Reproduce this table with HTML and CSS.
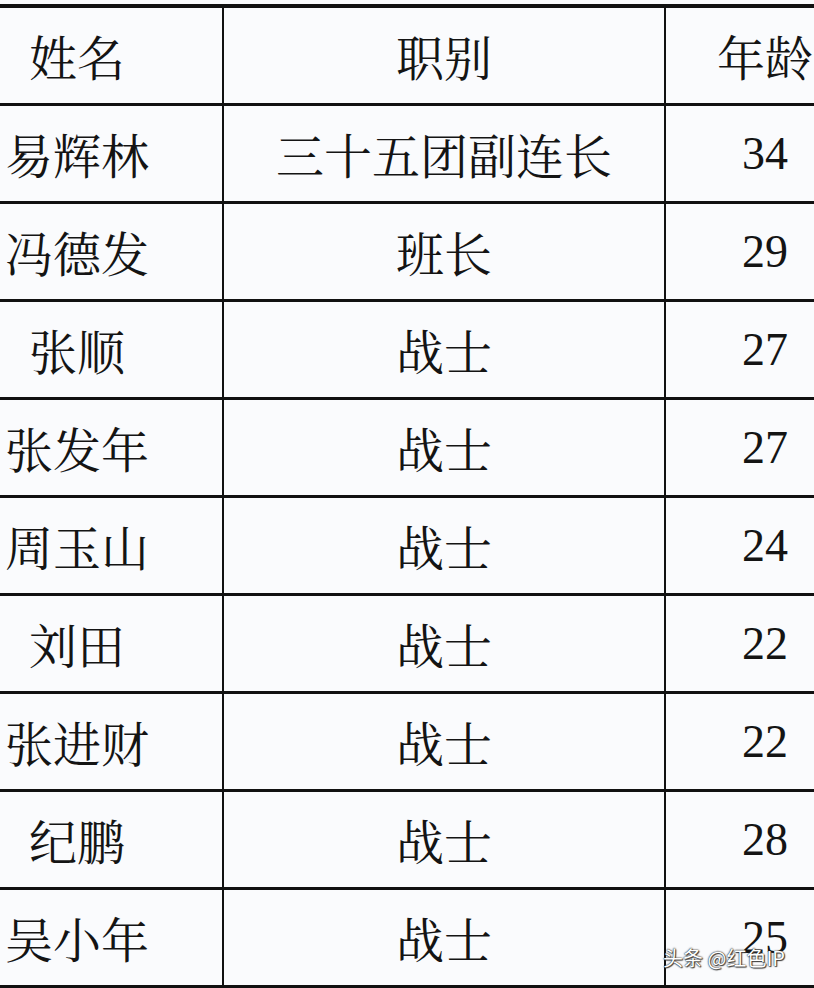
FILE: index.html
```html
<!DOCTYPE html>
<html lang="zh-CN">
<head>
<meta charset="utf-8">
<title>名单</title>
<link rel="stylesheet" href="styles.css">
</head>
<body>
<div class="page">
  <div class="sheet">
    <div class="cell c1 head">姓名</div><div class="cell c2 head">职别</div><div class="cell c3 head">年龄</div>
    <div class="cell c1">易辉林</div><div class="cell c2">三十五团副连长</div><div class="cell c3 num">34</div>
    <div class="cell c1">冯德发</div><div class="cell c2">班长</div><div class="cell c3 num">29</div>
    <div class="cell c1">张顺</div><div class="cell c2">战士</div><div class="cell c3 num">27</div>
    <div class="cell c1">张发年</div><div class="cell c2">战士</div><div class="cell c3 num">27</div>
    <div class="cell c1">周玉山</div><div class="cell c2">战士</div><div class="cell c3 num">24</div>
    <div class="cell c1">刘田</div><div class="cell c2">战士</div><div class="cell c3 num">22</div>
    <div class="cell c1">张进财</div><div class="cell c2">战士</div><div class="cell c3 num">22</div>
    <div class="cell c1">纪鹏</div><div class="cell c2">战士</div><div class="cell c3 num">28</div>
    <div class="cell c1">吴小年</div><div class="cell c2">战士</div><div class="cell c3 num">25</div>
  </div>
  <div class="mark">头条 @红色IP</div>
</div>
</body>
</html>
```
FILE: styles.css
```css
html, body {
  margin: 0;
  padding: 0;
  background: #fafbfd;
}
.page {
  position: relative;
  width: 814px;
  height: 988px;
  overflow: hidden;
  background: #fafbfd;
}
.sheet {
  display: grid;
  grid-template-columns: 292px 442px 200px;
  grid-auto-rows: 98px;
  margin: 4px 0 0 -68px;
  width: 934px;
  border-top: 4px solid #111;
  font-family: "Noto Serif CJK SC", "Noto Serif SC", "AR PL UMing CN", "Liberation Serif", "Noto Sans CJK SC", serif;
  color: #141414;
}
.cell {
  box-sizing: border-box;
  border-bottom: 3px solid #111;
  display: flex;
  align-items: center;
  justify-content: center;
  font-size: 48px;
  line-height: 1;
  white-space: nowrap;
}
.c1, .c2 {
  border-right: 2px solid #111;
}
.c3 {
  padding-right: 2px;
}
.num {
  font-family: "Liberation Serif", "Times New Roman", serif;
  font-size: 46px;
}
.mark {
  position: absolute;
  left: 663px;
  top: 943px;
  font-family: "Noto Sans CJK SC", "Noto Sans", sans-serif;
  font-size: 20px;
  color: #fff;
  text-shadow: 0 0 1px #222, 0 0 2px #333, 1px 1px 1px #444;
  white-space: nowrap;
}
```
